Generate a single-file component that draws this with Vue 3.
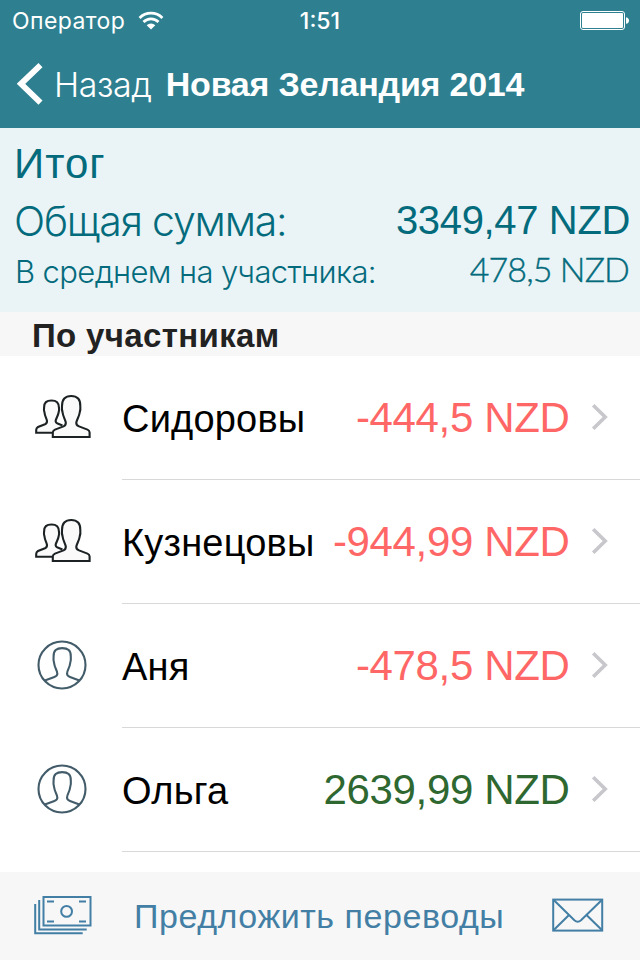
<template>
  <div class="screen">
    <header class="header">
      <div class="status">
        <div class="status-left">
          <span class="carrier">Оператор</span>
          <svg class="wifi" width="26" height="20" viewBox="0 0 26 20">
            <path d="M1.6 6.9a16.2 16.2 0 0 1 22.8 0" />
            <path d="M5.5 11a10.6 10.6 0 0 1 15 0" />
            <path class="solid" d="M13 18.6l-4.3-4.4a6.1 6.1 0 0 1 8.6 0z" />
          </svg>
        </div>
        <span class="clock">1:51</span>
        <svg class="battery" width="50" height="20" viewBox="0 0 50 20">
          <rect class="shell" x="0.5" y="0.5" width="44" height="18" rx="2.5" />
          <rect x="2" y="2" width="41" height="15" rx="1" />
          <path d="M46 6.2c4 .6 4 6 0 6.6z" />
        </svg>
      </div>
      <nav class="nav">
        <svg class="back-arrow" width="26" height="42" viewBox="0 0 26 42">
          <path d="M23.5 2.2L4 20.8l19.5 18.8" />
        </svg>
        <span class="back">Назад</span>
        <h1 class="title">Новая Зеландия 2014</h1>
      </nav>
    </header>

    <section class="summary">
      <h2 class="summary-title">Итог</h2>
      <div class="total">
        <span class="total-label">Общая сумма:</span>
        <span class="total-value">3349,47 NZD</span>
      </div>
      <div class="average">
        <span class="average-label">В среднем на участника:</span>
        <span class="average-value">478,5 NZD</span>
      </div>
    </section>

    <h3 class="section-title">По участникам</h3>

    <ul class="list">
      <li v-for="item in participants" :key="item.name" class="row">
        <div class="avatar">
          <svg v-if="item.group" class="group" width="56" height="46" viewBox="0 0 56 46">
            <path :d="backPerson" />
            <path :d="frontPerson" />
          </svg>
          <svg v-else class="single" width="50" height="50" viewBox="0 0 50 50">
            <circle cx="25" cy="25" r="23.5" />
            <path :d="bust" />
          </svg>
        </div>
        <div class="row-body">
          <span class="name">{{ item.name }}</span>
          <span class="amount" :class="{ positive: item.positive }">{{ item.amount }}</span>
          <svg class="chevron" width="18" height="28" viewBox="0 0 18 28">
            <path d="M2.2 2.2L14.2 14l-12 11.8" />
          </svg>
        </div>
      </li>
    </ul>

    <footer class="toolbar">
      <svg class="money" width="58" height="40" viewBox="0 0 58 40">
        <rect x="9.5" y="2" width="47" height="28.5" />
        <path d="M5.2 5v29.5h47.5M1.2 9v29.2h47.5" />
        <path d="M13 6.5h7M45 6.5h7M13 26.5h7M45 26.5h7" />
        <circle cx="32.6" cy="16.4" r="5.4" />
      </svg>
      <span class="transfers">Предложить переводы</span>
      <svg class="mail" width="52" height="34" viewBox="0 0 52 34">
        <rect x="1.2" y="1.6" width="49" height="31" />
        <path d="M2 2.2L22.4 22.2q3.3 3 6.6 0L49.6 2.2M2 31.8L17 17M49.6 31.8L34.5 17" />
      </svg>
    </footer>
  </div>
</template>

<script setup>
const participants = [
  { name: "Сидоровы", amount: "-444,5 NZD", group: true },
  { name: "Кузнецовы", amount: "-944,99 NZD", group: true },
  { name: "Аня", amount: "-478,5 NZD" },
  { name: "Ольга", amount: "2639,99 NZD", positive: true },
];

const backPerson =
  "M27.5 31.4L22.6 29.6Q20.4 28.8 20.7 26.5C21.2 24.2 23 22 23.6 18.5Q24.4 16.5 24 14C24 8.5 21.5 6.5 16.5 6.5S9 8.5 9.1 13.5Q8.6 16.5 9.5 18.5C9.8 22 11.6 24.4 12 27Q12.2 29.2 10 30.2L3 33Q1.2 34 1.2 36V38.8H18";
const frontPerson =
  "M17.8 43V38.5Q18 36.5 20 35.6L28.5 32.4Q31 31.2 30.8 28.5C30.2 25.5 28 22.5 27.6 18.5Q26.6 16 27 12C27 5.5 30 2 36.2 2S45.5 5.5 45.3 12Q45.7 16 44.7 18.5C44.3 22.5 41.8 25.5 41.3 28.5Q41 31.2 44 32.4L52.5 35.6Q54.5 36.5 54.6 38.5V43Z";
const bust =
  "M7.8 40.6L17.4 37Q20.6 35.8 20.3 33.5C20.3 30 17.6 28 17.2 23.5Q16.1 20 16.6 16.5C16.4 10.5 19.5 8.1 25.2 8.1S34 10.5 33.8 16.5Q34.2 20.5 33.1 23.5C32.7 28 30.1 30 30.1 33.5Q29.8 35.8 33 37L42.4 40.6";
</script>

<style>
body {
  margin: 0;
}
</style>

<style scoped>
.screen {
  width: 640px;
  height: 960px;
  display: flex;
  flex-direction: column;
  overflow: hidden;
  background: #fff;
  font-family: "Liberation Sans", Arial, sans-serif;
  white-space: nowrap;
}

svg {
  display: block;
  flex: none;
  fill: none;
}

h1,
h2,
h3,
ul {
  margin: 0;
  padding: 0;
}

.header {
  height: 128px;
  background: #2e8090;
  color: #fff;
}

.status {
  display: grid;
  grid-template-columns: 1fr auto 1fr;
  align-items: center;
  height: 40px;
  padding: 1px 10px 0;
  box-sizing: border-box;
}

.status-left {
  display: flex;
  align-items: center;
  gap: 13px;
  padding-left: 2px;
}

.carrier {
  font-family: Inter, sans-serif;
  font-size: 23px;
  font-weight: 400;
  letter-spacing: 0.4px;
}

.wifi {
  stroke: #fff;
  stroke-width: 2.8;
}

.wifi .solid {
  fill: #fff;
  stroke: none;
}

.clock {
  font-family: Inter, sans-serif;
  font-size: 23px;
  font-weight: 500;
}

.battery {
  justify-self: end;
  fill: #fff;
}

.battery .shell {
  fill: none;
  stroke: #fff;
}

.nav {
  display: flex;
  align-items: center;
  height: 88px;
  padding-left: 17px;
}

.back-arrow {
  stroke: #fff;
  stroke-width: 5.8;
}

.back {
  margin-left: 11px;
  font-family: Inter, sans-serif;
  font-size: 34px;
  font-weight: 300;
  letter-spacing: -0.4px;
}

.title {
  margin-left: 14px;
  font-size: 34px;
  font-weight: 700;
  letter-spacing: -0.22px;
}

.summary {
  height: 184px;
  padding: 7px 10px 0 14px;
  box-sizing: border-box;
  background: #eaf4f6;
  color: #046b7d;
}

.summary-title {
  font-size: 42px;
  font-weight: 400;
  letter-spacing: 1px;
  line-height: 57px;
}

.total,
.average {
  display: flex;
  justify-content: space-between;
}

.total {
  line-height: 59px;
}

.total-label {
  font-family: Inter, sans-serif;
  font-size: 41px;
  font-weight: 300;
  letter-spacing: -1.2px;
}

.total-value {
  font-size: 40px;
  letter-spacing: -0.35px;
  line-height: 57px;
}

.average {
  line-height: 42px;
}

.average-label {
  padding-left: 1px;
  font-family: Inter, sans-serif;
  font-size: 31px;
  font-weight: 300;
  letter-spacing: -0.62px;
}

.average-value {
  padding-right: 1px;
  font-family: Lato, sans-serif;
  font-size: 34px;
  font-weight: 300;
  letter-spacing: -0.9px;
  line-height: 35px;
  -webkit-text-stroke: 0.4px currentColor;
}

.section-title {
  height: 44px;
  padding-left: 32px;
  background: #f7f7f7;
  color: #222;
  font-size: 33px;
  font-weight: 700;
  letter-spacing: 0.35px;
  line-height: 47px;
}

.list {
  flex: 1;
  list-style: none;
}

.row {
  display: flex;
  height: 124px;
}

.avatar {
  display: flex;
  align-items: center;
  width: 122px;
  height: 122px;
}

.group {
  margin-left: 35px;
  stroke: #1c2223;
  stroke-width: 2.1;
}

.group path {
  fill: #fafafa;
}

.single {
  margin-left: 37px;
  stroke: #435c6a;
  stroke-width: 2.1;
}

.row-body {
  flex: 1;
  display: flex;
  align-items: center;
  border-bottom: 1px solid #d8d8da;
}

.name {
  padding-top: 4px;
  font-size: 38px;
  letter-spacing: 0.2px;
  color: #000;
}

.amount {
  margin-left: auto;
  font-size: 42px;
  letter-spacing: -0.35px;
  color: #ff6666;
}

.positive {
  color: #2e6830;
}

.chevron {
  margin: 0 31px 2px 21.5px;
  stroke: #c7c7cc;
  stroke-width: 3.6;
}

.toolbar {
  display: flex;
  align-items: center;
  height: 88px;
  padding: 0 36px 0 34px;
  box-sizing: border-box;
  background: #f7f7f7;
  color: #437fa5;
}

.money,
.mail {
  margin-bottom: 2px;
  stroke: #437fa5;
  stroke-width: 2;
}

.transfers {
  margin-left: 42px;
  font-size: 34px;
  letter-spacing: 0.55px;
}

.mail {
  margin-left: auto;
}
</style>
